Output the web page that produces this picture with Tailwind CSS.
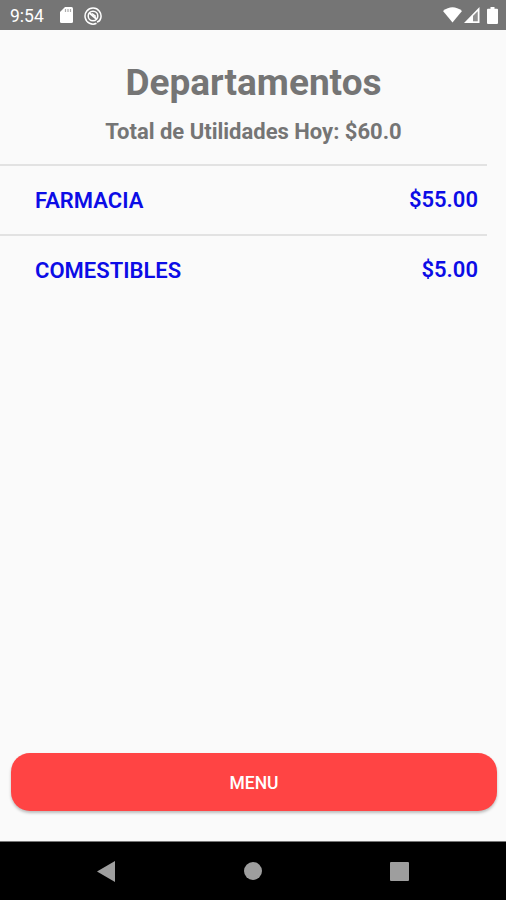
<!DOCTYPE html>
<html lang="es">
  <head>
    <meta charset="UTF-8" />
    <meta name="viewport" content="width=device-width, initial-scale=1.0" />
    <title>Departamentos</title>
    <script src="https://cdn.jsdelivr.net/npm/@tailwindcss/browser@4"></script>
  </head>

  <body class="h-[900px] flex flex-col overflow-hidden bg-[#fafafa] font-[Roboto,sans-serif]">
    <!-- Status bar -->
    <div class="h-[30px] shrink-0 flex items-center bg-[#757575] pl-[10px] pr-[8px] text-white">
      <span class="w-[50px] pt-[2px] text-[17.5px] leading-[28px]">9:54</span>
      <svg class="w-[13px] h-[16px]" viewBox="0 0 13 16">
        <path fill="#fff" d="M5 0h6.500Q13 0 13 1.500v13Q13 16 11.500 16h-10Q0 16 0 14.500V5z" />
        <path stroke="#757575" stroke-opacity=".6" stroke-width="1.200" d="M5.500 2v3M8 2v3M10.500 2v3" />
      </svg>
      <svg class="ml-[11px] mt-px w-[18px] h-[18px]" viewBox="0 0 18 18" fill="none" stroke="#fff">
        <path stroke-width="1.500" d="M12.500 16.300A8 8 0 1 1 16.800 11Q16 14.500 13 15" />
        <circle cx="9" cy="9" r="4.800" stroke-width="1.500" />
        <path stroke-width="2" d="M5.500 6l7 6" />
        <path stroke-width="1.300" d="M8 6.500l4 3" />
      </svg>
      <div class="ml-auto flex items-center">
        <svg class="w-[19px] h-[16px]" viewBox="0 0 19 16">
          <path fill="#fff" d="M0 4Q9.500-3.500 19 4L9.500 15.500z" />
        </svg>
        <svg class="ml-[2px] w-[16px] h-[16px]" viewBox="0 0 16 16">
          <path fill="#fff" fill-rule="evenodd" d="M15.500 0v16H0zM13.700 4.200L9 9v5.300h4.700z" />
          <path fill="#fff" fill-opacity=".2" d="M13.700 4.200L9 9v5.300h4.700z" />
        </svg>
        <svg class="ml-[7px] w-[11px] h-[17px]" viewBox="0 0 11 17">
          <path fill="#fff" d="M3.500 0h4v1.700H10q1 0 1 1V16q0 1-1 1H1q-1 0-1-1V2.700q0-1 1-1h2.500z" />
        </svg>
      </div>
    </div>

    <!-- Header -->
    <div class="pt-[29px] pl-px text-center font-bold text-[#757575]">
      <h1 class="text-[37px] leading-[48px]">Departamentos</h1>
      <p class="mt-[11px] text-[22px] leading-[28px]">Total de Utilidades Hoy: $60.0</p>
    </div>

    <!-- Departments -->
    <ul class="mt-[18px] mr-[19px] text-[22px] leading-[28px] font-semibold text-[#0c0ce6]">
      <li class="h-[70px] flex justify-between border-t-2 border-[#e2e2e2] pt-[21px] pl-[35px] pr-[9px]">
        <span>FARMACIA</span>
        <span class="-mt-px">$55.00</span>
      </li>
      <li class="h-[70px] flex justify-between border-t-2 border-[#e2e2e2] pt-[21px] pl-[35px] pr-[9px]">
        <span>COMESTIBLES</span>
        <span class="-mt-px">$5.00</span>
      </li>
    </ul>

    <button class="mt-auto mb-[30px] ml-[11px] mr-[9px] h-[58px] shrink-0 rounded-[19px] bg-[#ff4444] pt-[2px] text-[17.5px] font-medium text-white shadow-[0_2px_3px_rgba(0,0,0,0.25)]">
      MENU
    </button>

    <!-- Navigation bar -->
    <div class="h-[59px] shrink-0 flex items-center justify-between border-t border-[#777] bg-black pl-[97px] pr-[97px]">
      <svg class="w-[18px] h-[21px]" viewBox="0 0 18 21">
        <path fill="#9e9e9e" d="M18 0v21L0 10.500z" />
      </svg>
      <div class="ml-px w-[18px] h-[18px] rounded-full bg-[#9e9e9e]"></div>
      <div class="w-[19px] h-[19px] rounded-[1px] bg-[#9e9e9e]"></div>
    </div>
  </body>
</html>
